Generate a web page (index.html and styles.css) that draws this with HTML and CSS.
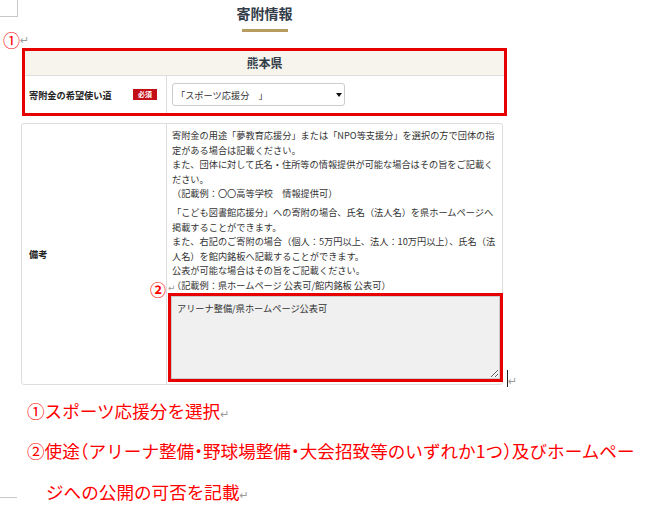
FILE: index.html
```html
<!DOCTYPE html>
<html lang="ja">
<head>
<meta charset="utf-8">
<title>寄附情報</title>
<link rel="stylesheet" href="styles.css">
</head>
<body>
<div class="page">
  <span class="crop crop-top"></span>
  <span class="crop crop-bottom"></span>

  <header class="heading">
    <h1 class="heading-title">寄附情報</h1>
    <div class="heading-bar"></div>
  </header>

  <div class="mark-line"><span class="circled">①</span><span class="ret">↵</span></div>

  <section class="highlight form-box">
    <div class="form-head">熊本県</div>
    <div class="form-row">
      <div class="form-label"><span>寄附金の希望使い道</span><span class="badge">必須</span></div>
      <div class="form-field">
        <div class="select-wrap">
          <select class="select"><option>「スポーツ応援分　」</option></select>
          <svg class="select-arrow" width="6" height="4" viewBox="0 0 6 4"><path d="M0 0H6L3 4Z" fill="#111"/></svg>
        </div>
      </div>
    </div>
  </section>

  <section class="note-table">
    <div class="note-label">備考</div>
    <div class="note-body">
      <div class="note-text">
        <p>寄附金の用途「夢教育応援分」または「NPO等支援分」を選択の方で団体の指<br>定がある場合は記載ください。<br>また、団体に対して氏名・住所等の情報提供が可能な場合はその旨をご記載く<br>ださい。<br>（記載例：〇〇高等学校　情報提供可）</p>
        <p>「こども図書館応援分」への寄附の場合、氏名（法人名）を県ホームページへ<br>掲載することができます。<br>また、右記のご寄附の場合（個人：5万円以上、法人：10万円以上）、氏名（法<br>人名）を館内銘板へ記載することができます。<br>公表が可能な場合はその旨をご記載ください。<br>（記載例：県ホームページ 公表可/館内銘板 公表可）</p>
      </div>
      <div class="highlight textarea-wrap"><textarea class="textarea">アリーナ整備/県ホームページ公表可</textarea></div>
    </div>
    <span class="circled circled-2">②</span>
    <span class="ret ret-2">↵</span>
    <span class="cursor-mark"><span class="cursor"></span><span class="ret">↵</span></span>
  </section>

  <div class="notes">
    <p class="note-line1">①スポーツ応援分を選択<span class="ret">↵</span></p>
    <p class="note-line2">②使途<span class="half">（</span>アリーナ整備<span class="half">・</span>野球場整備<span class="half">・</span>大会招致等のいずれか1つ<span class="half">）</span>及びホームペー<br>ジへの公開の可否を記載<span class="ret">↵</span></p>
  </div>
</div>
</body>
</html>
```
FILE: styles.css
```css
body {
  margin: 0;
  font-family: "Noto Sans CJK JP", "Noto Sans", sans-serif;
  color: #333;
  background: #fff;
}

.page {
  position: relative;
  width: 650px;
  height: 508px;
  overflow: hidden;
  background: #fff;
}

/* Word-style crop marks */
.crop {
  position: absolute;
  border-color: #c8c8c8;
  border-style: solid;
}
.crop-top {
  left: 0;
  top: 0;
  width: 17px;
  height: 16px;
  border-width: 0 1px 1px 0;
}
.crop-bottom {
  left: 0;
  top: 497px;
  width: 17px;
  height: 0;
  border-width: 1px 0 0 0;
}

/* heading */
.heading {
  margin-left: 22px;
  width: 485px;
  padding-top: 3px;
  text-align: center;
}
.heading-title {
  margin: 0;
  font-size: 14px;
  line-height: 20px;
  font-weight: 700;
  color: #333d4a;
}
.heading-bar {
  width: 46px;
  height: 3px;
  margin: 6px auto 0;
  background: #b89b5e;
}

/* annotation marks */
.mark-line {
  display: flex;
  align-items: center;
  height: 16px;
  margin-left: 3px;
  font-size: 17px;
  line-height: 16px;
  color: #f00;
}
.circled {
  color: #f00;
}
.ret {
  color: #9a9a9a;
  font-family: "DejaVu Sans", sans-serif;
  font-size: 11px;
  line-height: 1;
}

.highlight {
  border: 3px solid #e60000;
}

/* form box */
.form-box {
  margin-left: 22px;
  width: 485px;
  height: 68px;
  box-sizing: border-box;
}
.form-head {
  height: 24px;
  border-bottom: 1px solid #ddd;
  background: #f7f4ee;
  text-align: center;
  font-size: 12px;
  line-height: 24px;
  font-weight: 700;
  color: #333d4a;
}
.form-row {
  display: grid;
  grid-template-columns: 142px 1fr;
  height: 37px;
}
.form-label {
  display: flex;
  align-items: center;
  padding: 0 9px 0 4px;
  border-right: 1px solid #ddd;
  font-size: 9.2px;
  font-weight: 700;
  color: #222;
}
.badge {
  margin-left: auto;
  width: 24px;
  height: 11px;
  background: #c30d17;
  color: #fff;
  font-size: 7px;
  line-height: 11px;
  text-align: center;
}
.form-field {
  padding: 7px 0 0 5px;
}
.select-wrap {
  position: relative;
  width: 173px;
}
.select {
  -webkit-appearance: none;
  appearance: none;
  display: block;
  width: 173px;
  height: 23px;
  margin: 0;
  padding: 0 0 0 3px;
  border: 1px solid #ccc;
  border-radius: 3px;
  background: #fff;
  font-family: "Noto Sans CJK JP", sans-serif;
  font-size: 9.2px;
  color: #333;
  box-sizing: border-box;
}
.select-arrow {
  position: absolute;
  left: 164px;
  top: 10px;
}

/* remarks table */
.note-table {
  position: relative;
  display: grid;
  grid-template-columns: 145px 1fr;
  width: 482px;
  margin: 7px 0 0 21px;
  box-sizing: border-box;
  border: 1px solid #ddd;
  border-radius: 3px;
}
.note-label {
  display: flex;
  align-items: center;
  padding-left: 7px;
  border-right: 1px solid #ddd;
  font-size: 9.2px;
  font-weight: 700;
  color: #222;
}
.note-body {
  padding: 4px 0 2px 1px;
}
.note-text {
  padding-left: 4px;
  font-size: 9.2px;
  line-height: 14.5px;
  white-space: nowrap;
  color: #333;
}
.note-text p {
  margin: 0;
}
.note-text p + p {
  margin-top: 4.5px;
}
.textarea-wrap {
  height: 89px;
  margin: 1px -1px 0 0;
  box-sizing: border-box;
}
.textarea {
  display: block;
  width: 100%;
  height: 83px;
  margin: 0;
  padding: 4px 5px;
  box-sizing: border-box;
  border: 1px solid #ccc;
  background: #f0f0f0;
  font-family: "Noto Sans CJK JP", sans-serif;
  font-size: 9.2px;
  line-height: 14.5px;
  color: #333;
  resize: vertical;
}
.circled-2 {
  position: absolute;
  left: 128px;
  top: 157px;
  font-size: 16px;
  line-height: 16px;
  font-weight: 700;
}
.ret-2 {
  position: absolute;
  left: 146px;
  top: 160px;
  font-size: 9px;
}
.cursor-mark {
  position: absolute;
  left: 485px;
  top: 246px;
  display: flex;
  align-items: flex-end;
}
.cursor {
  width: 1px;
  height: 17px;
  background: #222;
}

/* bottom notes */
.notes {
  margin: 6px 0 0 27px;
  color: #f00;
  font-size: 17.6px;
}
.notes p {
  margin: 0;
}
.note-line1 {
  line-height: 39px;
}
.note-line2 {
  line-height: 41px;
  padding-left: 19px;
  text-indent: -19px;
}
.half {
  font-feature-settings: "halt";
}
```
